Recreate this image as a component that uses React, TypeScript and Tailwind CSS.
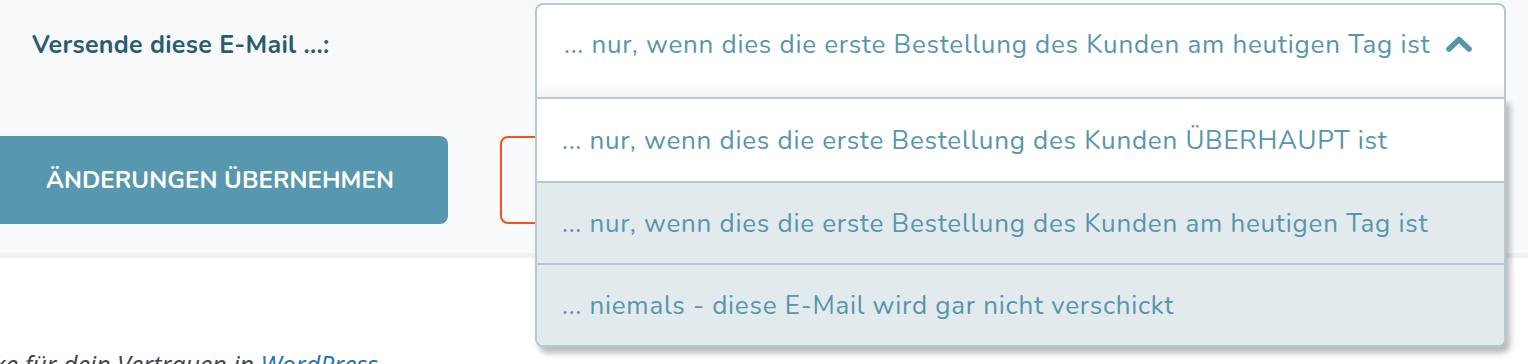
import { useState } from "react";

const options = [
  "... nur, wenn dies die erste Bestellung des Kunden ÜBERHAUPT ist",
  "... nur, wenn dies die erste Bestellung des Kunden am heutigen Tag ist",
  "... niemals - diese E-Mail wird gar nicht verschickt",
];

function ChevronUp() {
  return (
    <svg width="26" height="17" viewBox="0 0 26 17" className="shrink-0 -mt-[3px]">
      <path
        d="M3 14 L13 4.5 L23 14"
        fill="none"
        stroke="#5796ac"
        strokeWidth="5.5"
        strokeLinecap="round"
        strokeLinejoin="round"
      />
    </svg>
  );
}

export default function App() {
  const [selected, setSelected] = useState(1);

  return (
    <div className="w-[1528px] h-[364px] overflow-hidden bg-white font-['Nunito','Lato',sans-serif]">
      {/* settings panel */}
      <div className="bg-[#f7f9fb] border-b-[5px] border-[#edf1f3] h-[258px]">
        <div className="flex items-start pt-[3px]">
          <div className="w-[535px] pl-[32px] pt-[24px] text-[25px] font-bold text-[#2b5b6f] tracking-[0.3px]">
            Versende diese E-Mail ...:
          </div>

          <div className="relative w-[971px]">
            <div className="h-[94px] flex items-center gap-[16px] pl-[27px] pb-[13px] bg-[linear-gradient(to_bottom,#ffffff_84%,#f2f3f4)] border-2 border-b-0 border-[#b6cad4] rounded-t-[8px] text-[26px] tracking-[0.75px] text-[#5796ac]">
              <span>{options[selected]}</span>
              <ChevronUp />
            </div>

            {/* open list */}
            <ul className="absolute left-0 right-0 top-[94px] z-10 bg-white border-2 border-[#b6cad4] rounded-b-[8px] overflow-hidden shadow-[4px_6px_6px_rgba(0,0,0,0.28)]">
              {options.map((opt, i) => (
                <li
                  key={opt}
                  onClick={() => setSelected(i)}
                  className={
                    "h-[82px] flex items-center pl-[25px] text-[26px] tracking-[0.75px] text-[#5796ac] cursor-pointer " +
                    (i > 0 ? "border-t-2 border-[#b6cad4] bg-[#e3eaee]" : "bg-white")
                  }
                >
                  {opt}
                </li>
              ))}
            </ul>
          </div>
        </div>

        <div className="flex items-center gap-[52px] mt-[39px] -ml-[8px]">
          <button className="h-[88px] w-[456px] rounded-[8px] bg-[#5797b0] text-white text-[24px] font-bold tracking-[0.1px]">
            ÄNDERUNGEN ÜBERNEHMEN
          </button>
          <button className="h-[88px] w-[300px] rounded-[8px] border-2 border-[#f4511e] bg-transparent text-[#f4511e] text-[24px] font-bold">
            ABBRECHEN
          </button>
        </div>
      </div>

      {/* footer */}
      <div className="pt-[94px] -ml-[52px] text-[25px] italic text-[#3c434a] font-['Open_Sans',sans-serif] leading-none whitespace-nowrap">
        Danke für dein Vertrauen in <a className="text-[#2271b1]">WordPress</a>.
      </div>
    </div>
  );
}
